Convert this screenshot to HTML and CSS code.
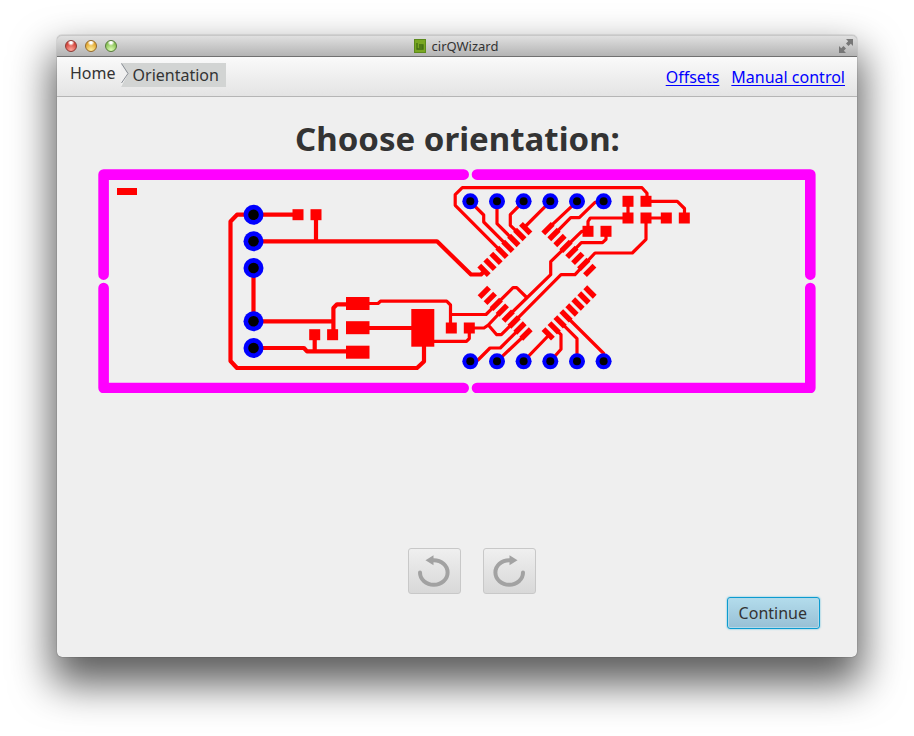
FILE: index.html
```html
<!DOCTYPE html>
<html lang="en">
<head>
<meta charset="utf-8">
<title>cirQWizard</title>
<link rel="stylesheet" href="styles.css">
</head>
<body>
<div class="window">
  <header class="titlebar">
    <div class="lights">
      <button class="light light-close" aria-label="Close"></button>
      <button class="light light-minimize" aria-label="Minimize"></button>
      <button class="light light-zoom" aria-label="Zoom"></button>
    </div>
    <div class="title">
      <svg class="app-icon" viewBox="0 0 12 14" aria-hidden="true">
        <rect width="12" height="14" fill="#5c8a1c"/>
        <rect x="1" y="1" width="10" height="12" fill="#79a722"/>
        <path d="M3 4V10H9V6H5M5 8H9" fill="none" stroke="#426c14" stroke-width="1.300"/>
      </svg>
      <span>cirQWizard</span>
    </div>
    <button class="fullscreen" aria-label="Full screen">
      <svg viewBox="0 0 14 14" aria-hidden="true">
        <path d="M7 0H14V7L11.800 4.800L9.500 7L7 4.500L9.200 2.200ZM0 7L2.200 9.200L4.500 7L7 9.500L4.800 11.800L7 14H0Z" fill="#777"/>
      </svg>
    </button>
  </header>
  <nav class="toolbar">
    <div class="crumbs">
      <a class="crumb" href="#home">Home</a>
      <a class="crumb crumb-current" href="#orientation">
        <svg class="chevron" viewBox="0 0 8 24" aria-hidden="true">
          <path d="M0 0L7 11L0 24Z" fill="#f0f0f0"/>
          <path d="M0.500 0.500L7 10.500L0.500 20" fill="none" stroke="#888d94"/>
        </svg>
        <span>Orientation</span>
      </a>
    </div>
    <div class="links">
      <a href="#offsets">Offsets</a>
      <a href="#manual">Manual control</a>
    </div>
  </nav>
  <main class="content">
    <h1>Choose orientation:</h1>
    <svg class="board" viewBox="98 169 718 224" role="img" aria-label="Board preview">
      <defs>
        <rect id="pad" x="-5.500" y="-5.500" width="11" height="11"/>
        <rect id="down" x="-6.700" y="-2.700" width="13.400" height="5.400" transform="rotate(45)"/>
        <rect id="up" x="-6.700" y="-2.700" width="13.400" height="5.400" transform="rotate(-45)"/>
        <g id="via"><circle r="8" fill="#00f"/><circle r="4" fill="#000"/></g>
        <g id="hole"><circle r="10" fill="#00f"/><circle r="5.300" fill="#000"/></g>
      </defs>
      <g class="outline">
        <path d="M463.700 174.600H103.600V274.600M103.600 288V388H463.700M477 388H810.300V288M810.300 274.600V174.600H477"/>
      </g>
      <g class="trace trace-wide">
        <path d="M298 214.700H237L230.500 221.500V361L237 368H417L424 361.500V345"/>
        <path d="M316 214.700V241.300M253.500 241.300H437L471 274.500H481L484 271.500"/>
        <path d="M253.500 268V321.300H333.400M333.400 335V308L337 304.300H358"/>
        <path d="M253.500 348H304L307 351.300H358M314.700 335V351M358 328H423"/>
      </g>
      <g class="trace">
        <path d="M369 303.500H378L380.500 301.200H446.700L450.500 305V328M450.500 314.500H486L513 287.700H516.700L526.700 297.500"/>
        <path d="M433 341.300H466.500L469.300 338.500V328H484L488.300 325L502.300 310.200M488.300 325L496.700 334.700H501.300L561 274.700H575L595 253H632.300L646 239.300V218H666"/>
        <path d="M508.300 316L550.700 274.700V261.700L581.700 231.300H588"/>
        <path d="M470 361.300L478 360L490 348H500.300L520 328.300M497 361.300L526 334M523.500 361.300L549 335M550.300 361.300L561 349.300V334.700L554 327.500M577 361.300V338.700L560 321.700M603.700 361.300V353.500L566 316"/>
        <path d="M502 252.300L455.200 205.300V194.700L462.300 187.700H642L647 193.300V201.300H677.300L684.500 208.500V218"/>
        <path d="M470 201.300L483.700 215V222L508 246.300M497 201.300V223.700L513.700 240.300M523.500 201.300L510.300 214.700V225.300L519.700 234.300M550.300 201.300L525.700 226M577 201.300L548 228.700M603.700 201.300L595 202.300L579.300 217.700H570.700L554 234.700"/>
        <path d="M588 231.300V221.300L590.300 218H628V201.300M606 231.300V239.300L602.500 242.700H581.300L572 252.300"/>
      </g>
      <g class="copper">
        <rect x="117" y="188" width="20" height="7"/>
        <rect x="346" y="297" width="23.500" height="13"/>
        <rect x="346" y="321.200" width="23.500" height="13"/>
        <rect x="346" y="345.700" width="23.500" height="13"/>
        <rect x="411.300" y="309" width="23" height="37.700"/>
        <use href="#pad" x="298" y="214.700"/><use href="#pad" x="316" y="214.700"/>
        <use href="#pad" x="314.700" y="334.700"/><use href="#pad" x="332.600" y="334.700"/>
        <use href="#pad" x="451.300" y="328"/><use href="#pad" x="469.300" y="328"/>
        <use href="#pad" x="628" y="201.300"/><use href="#pad" x="646" y="201.300"/>
        <use href="#pad" x="628" y="218"/><use href="#pad" x="646" y="218"/>
        <use href="#pad" x="666.300" y="218"/><use href="#pad" x="684.300" y="218"/>
        <use href="#pad" x="588" y="231.300"/><use href="#pad" x="606" y="231.300"/>
        <use href="#down" x="484" y="270.300"/><use href="#down" x="490" y="264.300"/><use href="#down" x="496" y="258.300"/><use href="#down" x="502" y="252.300"/><use href="#down" x="507.900" y="246.400"/><use href="#down" x="513.800" y="240.500"/><use href="#down" x="519.800" y="234.500"/><use href="#down" x="525.700" y="228.600"/>
        <use href="#up" x="548" y="228.600"/><use href="#up" x="554" y="234.500"/><use href="#up" x="560" y="240.500"/><use href="#up" x="566" y="246.400"/><use href="#up" x="571.900" y="252.300"/><use href="#up" x="577.800" y="258.300"/><use href="#up" x="583.700" y="264.300"/><use href="#up" x="589.700" y="270.300"/>
        <use href="#up" x="484.300" y="292.300"/><use href="#up" x="490.300" y="298.300"/><use href="#up" x="496.300" y="304.300"/><use href="#up" x="502.300" y="310.200"/><use href="#up" x="508.200" y="316.100"/><use href="#up" x="514.100" y="322"/><use href="#up" x="520" y="328"/><use href="#up" x="526" y="334"/>
        <use href="#down" x="548.200" y="333.800"/><use href="#down" x="554.200" y="327.800"/><use href="#down" x="560.100" y="321.800"/><use href="#down" x="566" y="315.900"/><use href="#down" x="572" y="310"/><use href="#down" x="578" y="304"/><use href="#down" x="584" y="298"/><use href="#down" x="590" y="292"/>
      </g>
      <use href="#hole" x="253.500" y="214.700"/><use href="#hole" x="253.500" y="241.300"/><use href="#hole" x="253.500" y="268"/><use href="#hole" x="253.500" y="321.300"/><use href="#hole" x="253.500" y="348"/>
      <use href="#via" x="470.300" y="201.300"/><use href="#via" x="497" y="201.300"/><use href="#via" x="523.600" y="201.300"/><use href="#via" x="550.300" y="201.300"/><use href="#via" x="577" y="201.300"/><use href="#via" x="603.600" y="201.300"/>
      <use href="#via" x="470.300" y="361.300"/><use href="#via" x="497" y="361.300"/><use href="#via" x="523.600" y="361.300"/><use href="#via" x="550.300" y="361.300"/><use href="#via" x="577" y="361.300"/><use href="#via" x="603.600" y="361.300"/>
    </svg>
    <div class="rotate">
      <button class="rotate-button" aria-label="Rotate counterclockwise">
        <svg viewBox="0 0 34 34" aria-hidden="true">
          <path d="M3 18.500A13.800 12.300 0 1 0 16.800 6.200H14" fill="none" stroke="#a2a2a2" stroke-width="4" stroke-linecap="round"/>
          <path d="M8.500 6.200L16.500 1.200V11.200Z" fill="#a2a2a2"/>
        </svg>
      </button>
      <button class="rotate-button" aria-label="Rotate clockwise">
        <svg viewBox="0 0 34 34" aria-hidden="true">
          <path d="M31 18.500A13.800 12.300 0 1 1 17.200 6.200H20" fill="none" stroke="#a2a2a2" stroke-width="4" stroke-linecap="round"/>
          <path d="M25.500 6.200L17.500 1.200V11.200Z" fill="#a2a2a2"/>
        </svg>
      </button>
    </div>
    <button class="continue">Continue</button>
  </main>
</div>
</body>
</html>
```

FILE: styles.css
```css
* {
  box-sizing: border-box;
}

body {
  margin: 0;
  min-height: 100vh;
  display: flex;
  padding: 35px 57px 79px;
  background: #fff;
  color: #333;
  font: 16px/20px "Noto Sans", "Open Sans", sans-serif;
}

button {
  margin: 0;
  padding: 0;
  border: 0;
  background: none;
  color: inherit;
  font: inherit;
}

svg {
  display: block;
}

.window {
  flex: 1;
  min-width: 0;
  display: flex;
  flex-direction: column;
  border-radius: 5px;
  background: #efefef;
  box-shadow: 0 0 1px rgba(0, 0, 0, 0.7), 0 22px 40px 5px rgba(0, 0, 0, 0.64);
}

.titlebar {
  height: 22px;
  display: grid;
  grid-template-columns: 1fr auto 1fr;
  align-items: center;
  padding: 0 4px 0 8px;
  border-bottom: 1px solid #707070;
  border-radius: 5px 5px 0 0;
  background: linear-gradient(#e2e2e2, #b4b4b4);
  box-shadow: inset 0 1px #c8c8c8;
}

.lights {
  display: flex;
  gap: 8px;
}

.light {
  width: 12px;
  height: 12px;
  border: 1px solid;
  border-radius: 50%;
}

.light-close {
  border-color: #8c3a35;
  background: radial-gradient(circle at 50% 15%, #fff 0 12%, transparent 35%), radial-gradient(circle at 50% 90%, #ffa89c, #d64940 65%);
}

.light-minimize {
  border-color: #94692a;
  background: radial-gradient(circle at 50% 15%, #fff 0 12%, transparent 35%), radial-gradient(circle at 50% 90%, #fff0a0, #e5ac37 65%);
}

.light-zoom {
  border-color: #567b3a;
  background: radial-gradient(circle at 50% 15%, #fff 0 12%, transparent 35%), radial-gradient(circle at 50% 90%, #deffb5, #8dc45a 65%);
}

.title {
  display: flex;
  align-items: center;
  gap: 6px;
  padding-right: 6px;
  font-size: 13px;
}

.app-icon {
  width: 12px;
  height: 14px;
}

.fullscreen {
  justify-self: end;
}

.fullscreen svg {
  width: 14px;
  height: 14px;
}

.toolbar {
  height: 40px;
  display: flex;
  justify-content: space-between;
  align-items: center;
  padding: 0 12px 0 13px;
  border-bottom: 1px solid #b5b5b5;
  background: linear-gradient(#fafafa, #e4e4e4);
}

.crumbs {
  display: flex;
  align-items: flex-start;
  gap: 5px;
  padding-bottom: 4px;
}

.crumb {
  color: #333;
  text-decoration: none;
}

.crumb-current {
  display: flex;
  align-items: center;
  gap: 4px;
  padding-right: 7px;
  background: #d2d4d3;
}

.chevron {
  width: 8px;
  height: 24px;
}

.links {
  display: flex;
  gap: 12px;
}

.links a {
  color: #00f;
  text-underline-offset: 2px;
}

.content {
  flex: 1;
  display: flex;
  flex-direction: column;
  padding: 22px 37px 28px 41px;
}

h1 {
  margin: 0;
  padding-right: 3px;
  font-size: 33px;
  line-height: 40px;
  text-align: center;
}

.board {
  width: 100%;
  margin-top: 10px;
  padding-right: 4px;
}

.outline {
  fill: none;
  stroke: #f0f;
  stroke-width: 10.6;
  stroke-linecap: round;
  stroke-linejoin: round;
}

.trace {
  fill: none;
  stroke: #f00;
  stroke-width: 3.2;
  stroke-linejoin: round;
}

.trace-wide {
  stroke-width: 4.2;
}

.copper {
  fill: #f00;
}

.rotate {
  display: flex;
  justify-content: center;
  gap: 22px;
  margin-top: auto;
  padding-left: 25px;
}

.rotate-button {
  width: 53px;
  height: 46px;
  display: grid;
  place-items: center;
  border: 1px solid #c8c8c8;
  border-radius: 3px;
  background: linear-gradient(#efefef, #d8d8d8);
}

.rotate-button svg {
  width: 34px;
  height: 34px;
}

.continue {
  align-self: flex-end;
  margin-top: 3px;
  padding: 5px 12px 5px 11px;
  border: 1px solid #0c9bd0;
  border-radius: 3px;
  background: linear-gradient(#b3dcec, #98c0d5);
  box-shadow: 0 0 2px #4bb9dd, inset 0 0 0 1px #b1d9e9;
}
```
